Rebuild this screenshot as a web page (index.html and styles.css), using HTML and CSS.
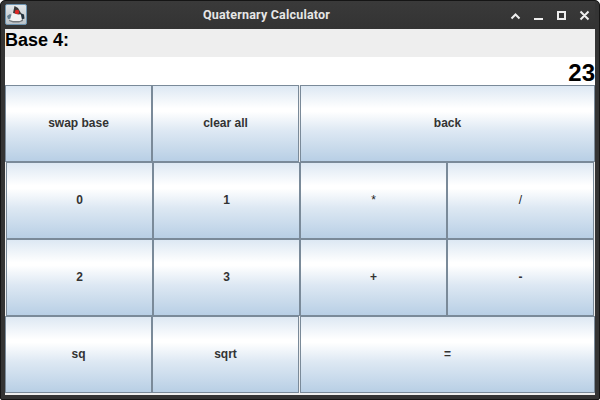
FILE: index.html
```html
<!DOCTYPE html>
<html lang="en">
<head>
<meta charset="utf-8">
<title>Quaternary Calculator</title>
<link rel="stylesheet" href="styles.css">
</head>
<body>
<div class="window">
  <header class="titlebar">
    <svg class="app-icon" width="22" height="21" viewBox="0 0 22 21">
      <defs><linearGradient id="sky" x1="0" y1="0" x2="0" y2="1"><stop offset="0" stop-color="#e4e8ea"/><stop offset="1" stop-color="#b9c1c7"/></linearGradient></defs>
      <rect x=".5" y=".5" width="21" height="20" rx="1.500" fill="url(#sky)" stroke="#6e94b0"/>
      <path d="M2 12l3-2 2 1v3.500l-4 .5z" fill="#647f90"/>
      <path d="M15 9l4 1.500 .5 4-4 1.500z" fill="#24323d"/>
      <path d="M8 8l-2 4-1 4 5 2h5l2-2-1-5-2-3z" fill="#f2f2f2"/>
      <path d="M9.500 2l3.500 2 3.500 6-3 .5L8 9z" fill="#3a3a3a"/>
      <path d="M4 16l4 1h7l3-2v2l-4 1.500H8l-4-1.500z" fill="#74787b"/>
      <circle cx="12" cy="8" r="2.200" fill="#dc2826"/>
    </svg>
    <h1 class="title">Quaternary Calculator</h1>
    <svg class="controls" width="82" height="14" viewBox="0 0 82 14" fill="none" stroke="#eee" stroke-width="2">
      <path d="M1.500 10.500L5.500 6.500l4 4M24 11h9M48 4h7v7h-7zM70.500 3.500l8 8M78.500 3.500l-8 8"/>
    </svg>
  </header>
  <main class="content">
    <div class="base">Base 4:</div>
    <div class="display">23</div>
    <div class="row wide"><button>swap base</button><button>clear all</button><button class="last">back</button></div>
    <div class="row"><button>0</button><button>1</button><button class="thin">*</button><button class="thin">/</button></div>
    <div class="row"><button>2</button><button>3</button><button>+</button><button>-</button></div>
    <div class="row wide"><button>sq</button><button>sqrt</button><button class="last">=</button></div>
  </main>
</div>
</body>
</html>
```
FILE: styles.css
```css
* { box-sizing: border-box; }
body { margin: 0; background: #fff; overflow: hidden; }
.window {
  width: 600px;
  height: 400px;
  border: 1px solid #151515;
  border-radius: 5px 5px 2px 2px;
  background: #343434;
  padding: 0 4px 4px;
}
.titlebar {
  height: 28px;
  display: grid;
  grid-template-columns: 82px 1fr 85px;
  background: linear-gradient(#3a3a3a, #333);
}
.app-icon { margin-top: 3px; }
.title {
  margin: 0;
  padding-right: 64px;
  font: bold 12.5px/28px Roboto, sans-serif;
  letter-spacing: 0.2px;
  color: #e6e6e6;
  text-align: center;
  white-space: nowrap;
}
.controls { margin-top: 7px; }
.content { height: 366px; background: #eee; font-family: "Liberation Sans", sans-serif; font-weight: bold; }
.base { height: 28px; font-size: 18px; line-height: 22px; color: #000; }
.display { height: 28px; background: #fff; font-size: 24px; line-height: 31px; text-align: right; color: #000; }
.row { display: grid; grid-template-columns: repeat(4, 147px); height: 77px; padding-left: 1px; }
.wide { grid-template-columns: 147px 147px 295px; padding-left: 0; }
.wide .last { margin-left: 1px; width: 295px; }
button {
  border: 1px solid #7a8a99;
  padding: 0 0 1px;
  margin: 0;
  background: linear-gradient(#dde8f3, #fff 30%, #fff 34%, #dde8f3 60%, #b8cfe5);
  font: bold 12px "Liberation Sans", sans-serif;
  color: #333;
}
.thin { font-weight: normal; color: #222; }
```
